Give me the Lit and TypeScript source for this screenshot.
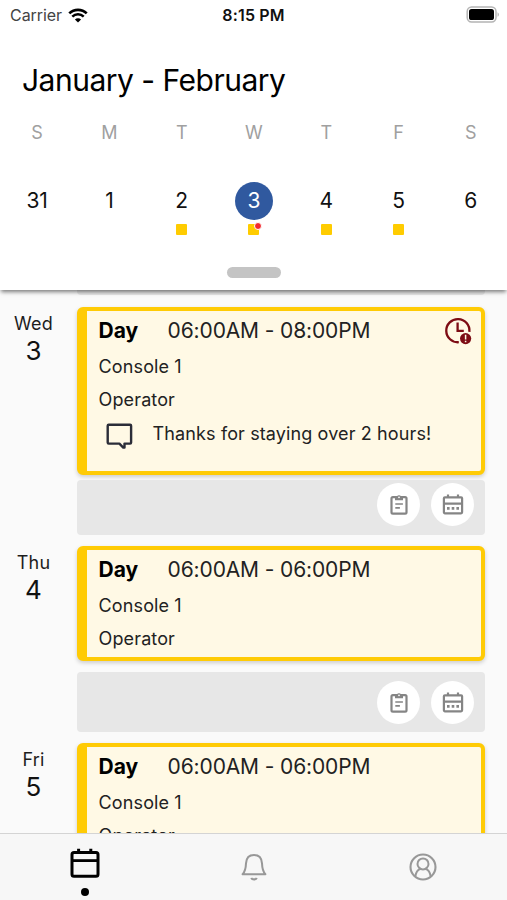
import { LitElement, html, css, svg, nothing } from "lit";
import { customElement, property } from "lit/decorators.js";

interface Shift {
  weekday: string;
  date: string;
  time: string;
  note?: string;
}

const WEEK = [
  { letter: "S", date: "31" },
  { letter: "M", date: "1" },
  { letter: "T", date: "2", shift: true },
  { letter: "W", date: "3", shift: true, selected: true, alert: true },
  { letter: "T", date: "4", shift: true },
  { letter: "F", date: "5", shift: true },
  { letter: "S", date: "6" },
];

const SHIFTS: Shift[] = [
  { weekday: "Wed", date: "3", time: "06:00AM - 08:00PM", note: "Thanks for staying over 2 hours!" },
  { weekday: "Thu", date: "4", time: "06:00AM - 06:00PM" },
  { weekday: "Fri", date: "5", time: "06:00AM - 06:00PM" },
];

const icon = (w: number, h: number, body: unknown) =>
  html`<svg width=${w} height=${h} viewBox="0 0 ${w} ${h}" fill="none" stroke="currentColor">${body}</svg>`;

const wifi = icon(20, 15, svg`
  <path d="M1.3 5.4a12.4 12.4 0 0 1 17.4 0" stroke-width="2.7"/>
  <path d="M4.3 8.7a8.1 8.1 0 0 1 11.4 0" stroke-width="2.5"/>
  <path d="M10 14.6 6.9 11.5a4.4 4.4 0 0 1 6.2 0Z" fill="currentColor" stroke="none"/>`);

const battery = icon(34, 17, svg`
  <rect x="1.2" y="1" width="28.8" height="15" rx="4.4" stroke="#b4b4b4" stroke-width="1.5"/>
  <rect x="3" y="3" width="25" height="11" rx="2.6" fill="#000" stroke="none"/>
  <path d="M31.6 6.2c1.6.7 1.6 3.9 0 4.6Z" fill="#a9a9a9" stroke="none"/>`);

const overtime = icon(28, 28, svg`
  <path d="M14.8 25.2A11.6 11.6 0 1 1 25.4 14.8" stroke-width="2.3"/>
  <path d="M13.6 5.6v8.3h6.2" stroke-width="2.3"/>
  <circle cx="21.6" cy="21.6" r="5.6" fill="currentColor" stroke="none"/>
  <path d="M21.6 17.7v4.9M21.6 23.7v1.6" stroke="#fff9e5" stroke-width="1.5"/>`);

const comment = icon(28, 27, svg`
  <path d="M2.7 1.8h21.4q1 0 1 1v16.8q0 1-1 1h-5.6v4h-1.2l-3.9-4H2.7q-1 0-1-1V2.8q0-1 1-1Z" stroke-width="2.4" stroke-linejoin="round"/>`);

const clipboard = icon(18, 21, svg`
  <rect x="1.5" y="3.2" width="15" height="16.4" rx="1.4" stroke-width="2.2"/>
  <path d="M5 2.6h2a2.1 2.1 0 0 1 4 0h2v3.7H5Z" fill="currentColor" stroke="none"/>
  <circle cx="9" cy="3.3" r=".9" fill="#fff" stroke="none"/>
  <path d="M5.3 10h7.6M5.3 13.8h4.6" stroke-width="1.7"/>`);

const schedule = icon(22, 21, svg`
  <rect x="1.9" y="3.3" width="18.2" height="16" rx="1" stroke-width="2.2"/>
  <path d="M2 9.6h18M6 .6v3M16 .6v3" stroke-width="2.2"/>
  <path d="M5 14.3h2.6M9.7 14.3h2.6M14.4 14.3H17" stroke-width="2.7"/>`);

const calendar = icon(30, 30, svg`
  <rect x="2" y="4.6" width="26" height="23.6" rx="2" stroke-width="3"/>
  <path d="M2 12.6h26" stroke-width="2.8"/>
  <path d="M8.6.8v3M20.8.8v3" stroke-width="3"/>`);

const bell = icon(26, 29, svg`
  <path d="M1.6 21.2h22.8c-2.6-2.6-3.2-5.4-3.4-10.8C20.7 5 17.6 2 13 2S5.3 5 5 10.4c-.2 5.4-.8 8.2-3.4 10.8Z" stroke-width="2" stroke-linejoin="round"/>
  <path d="M10.2 25a3.1 2.5 0 0 0 5.6 0" stroke-width="2.2"/>`);

const profile = icon(28, 28, svg`
  <circle cx="14" cy="14" r="12.5" stroke-width="2.1"/>
  <circle cx="14" cy="10.9" r="5.5" stroke-width="2"/>
  <path d="M6.3 23.7c.5-4.5 3-7.3 5.6-8M21.7 23.7c-.5-4.5-3-7.3-5.6-8" stroke-width="2"/>`);

@customElement("shift-row")
class ShiftRow extends LitElement {
  @property({ attribute: false }) shift!: Shift;

  static styles = css`
    :host { display: grid; grid-template-columns: 77px 408px; align-items: start; }
    svg { display: block; }
    .day { width: 67px; padding-top: 6px; text-align: center; color: #1d1d1d; }
    .weekday { font-size: 18px; line-height: 22px; letter-spacing: 0.2px; }
    .date { font-size: 26px; line-height: 32px; color: #111; }
    .card {
      box-sizing: border-box; height: 115px; padding: 7px 0 0 11.6px;
      border: 4px solid #ffcb05; border-left-width: 10px; border-radius: 6px;
      background: #fff9e5; box-shadow: 0 2px 4px rgba(0, 0, 0, 0.18); color: #222;
    }
    .card.noted { height: 168px; }
    .top { display: flex; height: 26px; line-height: 26px; }
    .name { width: 69px; font-weight: 700; font-size: 21px; color: #000; }
    .time { flex: 1; font-size: 21px; letter-spacing: -0.13px; }
    .overtime { margin: -1px 9px 0 0; color: #7d0c14; }
    .line { font-size: 18px; line-height: 34px; height: 33px; letter-spacing: 0.12px; }
    .first { margin-top: 6px; }
    .note { display: flex; margin-top: 1px; font-size: 18px; line-height: 34px; letter-spacing: 0.12px; }
    .bubble { margin: 6px 19px 0 7px; color: #2b2d38; }
    .actions {
      box-sizing: border-box; display: flex; justify-content: flex-end; align-items: center; gap: 11px;
      height: 60px; margin-top: 11px; padding-right: 11px; border-radius: 4px; background: #e7e7e7;
    }
    .actions.noted { height: 55px; margin-top: 5px; padding-bottom: 6px; }
    .button {
      display: grid; place-items: center; width: 43px; height: 43px; border-radius: 50%;
      background: #fff; color: #858585;
    }
  `;

  render() {
    const { weekday, date, time, note } = this.shift;
    const noted = note ? "noted" : "";
    return html`
      <div class="day">
        <div class="weekday">${weekday}</div>
        <div class="date">${date}</div>
      </div>
      <div>
        <div class="card ${noted}">
          <div class="top">
            <span class="name">Day</span>
            <span class="time">${time}</span>
            ${note ? html`<span class="overtime">${overtime}</span>` : nothing}
          </div>
          <div class="line first">Console 1</div>
          <div class="line">Operator</div>
          ${note ? html`<div class="note"><span class="bubble">${comment}</span><span class="message">${note}</span></div>` : nothing}
        </div>
        <div class="actions ${noted}">
          <span class="button">${clipboard}</span>
          <span class="button">${schedule}</span>
        </div>
      </div>`;
  }
}

@customElement("app-root")
class AppRoot extends LitElement {
  static styles = css`
    :host {
      display: flex; flex-direction: column; width: 507px; height: 900px; overflow: hidden;
      background: #fafafa; font-family: Inter, "Liberation Sans", sans-serif; color: #111;
    }
    svg { display: block; }
    .header {
      position: relative; z-index: 1; flex: none; box-sizing: border-box; height: 290px;
      background: #fff; box-shadow: 0 3px 4px -1px rgba(0, 0, 0, 0.5);
    }
    .status {
      display: grid; grid-template-columns: 1fr auto 1fr; align-items: center;
      height: 30px; padding: 0 7px 0 10px; font-size: 16px;
    }
    .carrier { display: flex; align-items: center; gap: 6px; color: #444; }
    .carrier span { letter-spacing: -0.05px; }
    .carrier svg { color: #000; }
    .clock { margin-right: 3px; font-weight: 600; letter-spacing: 0.15px; color: #111; }
    .battery { justify-self: end; margin-top: -2px; }
    .title { margin: 31px 0 0 22px; font-size: 30px; line-height: 38px; letter-spacing: -0.5px; color: #000; }
    .week { display: grid; grid-template-columns: repeat(7, 1fr); margin: 23px 0 0 1px; justify-items: center; text-align: center; }
    .cell { display: flex; flex-direction: column; align-items: center; }
    .letter { font-size: 18px; line-height: 22px; color: #a0a0a0; }
    .number {
      width: 38px; height: 38px; margin-top: 38px; border-radius: 50%;
      font-size: 21px; line-height: 38px; color: #111;
    }
    .number.selected { background: #30599f; color: #fff; }
    .marker { position: relative; width: 11px; height: 11px; margin-top: 4.4px; background: #fc0; border-radius: 1px; }
    .alert {
      position: absolute; top: -2px; right: -3px; width: 6px; height: 6px;
      border: 1px solid #fff; border-radius: 50%; background: #f3282d;
    }
    .handle { width: 54px; height: 11px; margin: 32px auto 0; border-radius: 6px; background: #c4c4c4; }
    .list { flex: 1; min-height: 0; overflow: hidden; }
    .previous { height: 5px; margin: 0 22px 12px 77px; border-radius: 0 0 4px 4px; background: #e7e7e7; }
    .list shift-row { margin-bottom: 11px; }
    .tabs {
      flex: none; box-sizing: border-box; display: grid; grid-template-columns: repeat(3, 1fr);
      height: 67px; border-top: 1px solid #d4d4d4; background: #f7f7f7; color: #989898;
    }
    .tab { display: flex; flex-direction: column; align-items: center; padding-top: 19px; }
    .tab.active { padding-top: 14px; color: #000; }
    .dot { width: 8px; height: 8px; margin-top: 10px; border-radius: 50%; background: #000; }
  `;

  render() {
    return html`
      <div class="header">
        <div class="status">
          <div class="carrier"><span>Carrier</span>${wifi}</div>
          <div class="clock">8:15 PM</div>
          <div class="battery">${battery}</div>
        </div>
        <div class="title">January - February</div>
        <div class="week">
          ${WEEK.map((d) => html`
            <div class="cell">
              <div class="letter">${d.letter}</div>
              <div class="number ${d.selected ? "selected" : ""}">${d.date}</div>
              ${d.shift ? html`<div class="marker">${d.alert ? html`<div class="alert"></div>` : nothing}</div>` : nothing}
            </div>`)}
        </div>
        <div class="handle"></div>
      </div>
      <div class="list">
        <div class="previous"></div>
        ${SHIFTS.map((s) => html`<shift-row .shift=${s}></shift-row>`)}
      </div>
      <div class="tabs">
        <div class="tab active">${calendar}<div class="dot"></div></div>
        <div class="tab">${bell}</div>
        <div class="tab">${profile}</div>
      </div>`;
  }
}
